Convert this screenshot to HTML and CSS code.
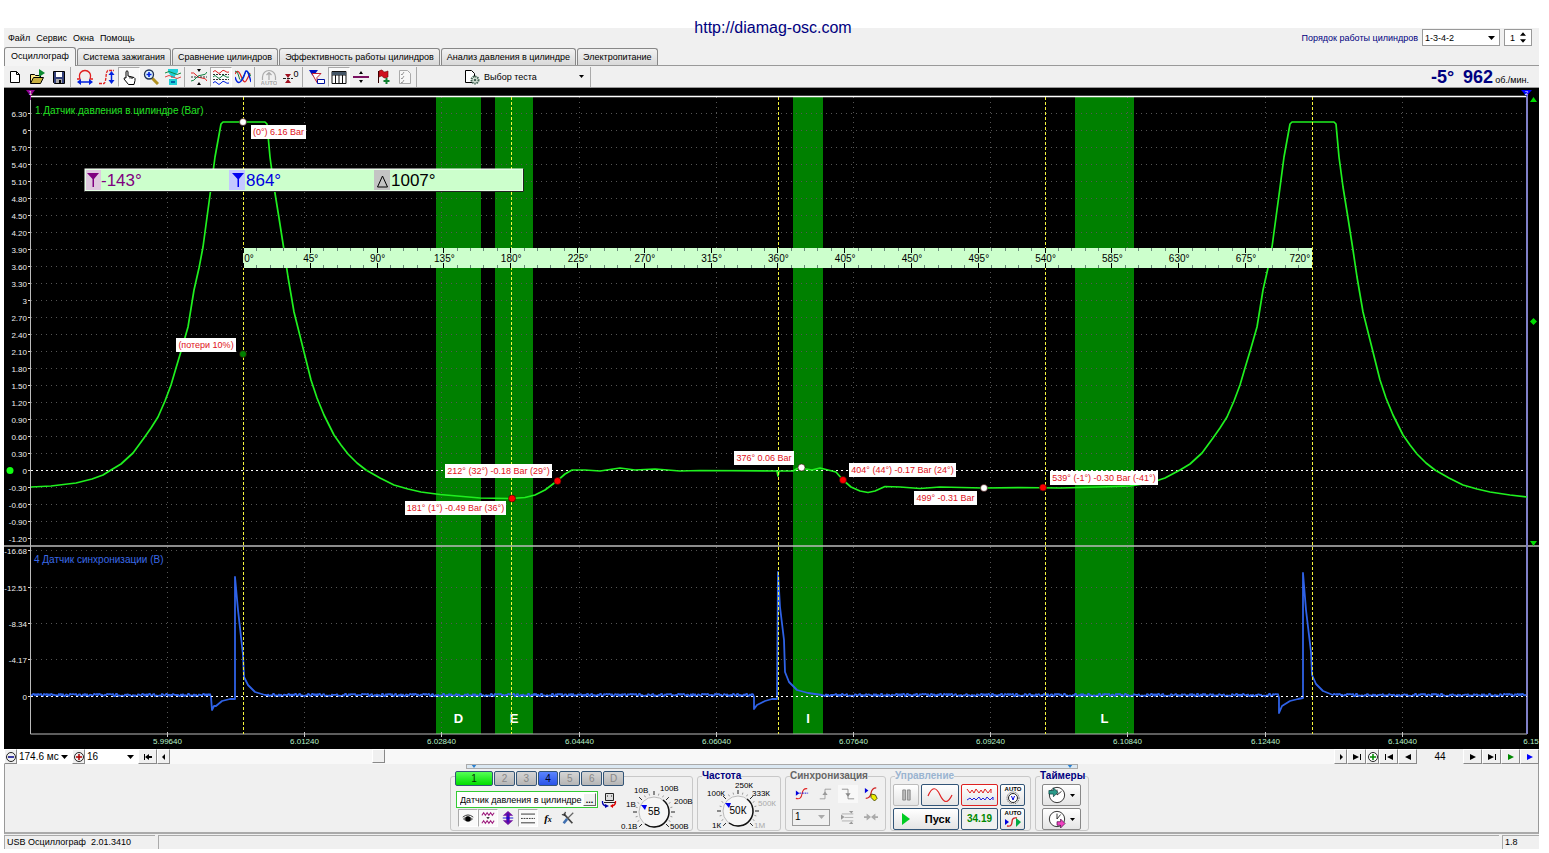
FILE: index.html
```html
<!DOCTYPE html>
<html lang="ru">
<head>
<meta charset="utf-8">
<title>USB Осциллограф</title>
<link rel="stylesheet" href="styles.css">
</head>
<body>
<a class="site-link" href="http://diamag-osc.com">http://diamag-osc.com</a>
<div class="app">
  <header class="top">
    <nav class="menu">
      <button>Файл</button><button>Сервис</button><button>Окна</button><button>Помощь</button>
    </nav>
    <div class="order">
      <label for="order">Порядок работы цилиндров</label>
      <span class="pick boxed order-pick"><select id="order"><option>1-3-4-2</option></select><svg class="caret" viewBox="0 0 7 4"><path d="M0 0h7L3.500 4z"/></svg></span>
      <span class="spin"><input id="cyl" aria-label="Цилиндр" value="1"><svg viewBox="0 0 7 12"><path d="M0 4h7L3.500 0zM0 8h7L3.500 12z"/></svg></span>
    </div>
  </header>
  <nav class="tabs">
    <button class="tab active">Осциллограф</button>
    <button class="tab">Система зажигания</button>
    <button class="tab">Сравнение цилиндров</button>
    <button class="tab">Эффективность работы цилиндров</button>
    <button class="tab">Анализ давления в цилиндре</button>
    <button class="tab">Электропитание</button>
  </nav>
  <div class="toolbar">
    <button class="tool" aria-label="Новый"><svg viewBox="0 0 16 16"><path d="M3.500 2.500h6l3 3v8h-9zM9.500 2.500v3h3" fill="#fff" stroke="#000"/></svg></button>
    <button class="tool" aria-label="Открыть"><svg viewBox="0 0 16 16"><path d="M1.500 14V5.500h4l1 1h5V9" fill="#ffe98a" stroke="#000"/><path d="M1.500 14.500l3-6h10l-3 6z" fill="#c8b040" stroke="#000"/><path d="M10 0l6 4-6 4z" fill="#0a8a30"/></svg></button>
    <button class="tool" aria-label="Сохранить"><svg viewBox="0 0 16 16"><path d="M2.500 2.500h11v12h-10l-1-1z" fill="#33407a" stroke="#000"/><path d="M5 3h6v5H5z" fill="#fff"/><path d="M5 10h6v4H5z" fill="#aaa"/><path d="M8 11h2v3H8z" fill="#000"/></svg></button>
    <i class="sep"></i>
    <button class="tool" aria-label="Период"><svg viewBox="0 0 16 16" fill="none"><path d="M0 10h3C1 4 5 1.500 8 1.500S15 4 13 10h3" stroke="#e02020" stroke-width="1.300"/><path d="M2 13h12" stroke="#0020e0" stroke-width="1.500"/><path d="M0 13l4-3v6zM16 13l-4-3v6z" fill="#0020e0"/></svg></button>
    <button class="tool" aria-label="Амплитуда"><svg viewBox="0 0 16 16" fill="none"><path d="M0 14.500h5C8 12 6 3 9 1.500h6" stroke="#e02020" stroke-width="1.300" stroke-dasharray="3 1"/><path d="M12.500 4v8" stroke="#0020e0" stroke-width="1.500"/><path d="M12.500 2l3 4h-6zM12.500 15l3-4h-6z" fill="#0020e0"/></svg></button>
    <button class="tool on" aria-label="Рука"><svg viewBox="0 0 16 16"><path d="M5 9V2.500Q6 1 7 2.500V7l6 1.500q1.500.5 1 3l-1 4H7.500L3 10q0-2 2-1M9 7.500v2M11 8v2" fill="#fff" stroke="#000"/></svg></button>
    <button class="tool" aria-label="Масштаб"><svg viewBox="0 0 16 16" fill="none"><path d="M9 9l6 6" stroke="#b09020" stroke-width="3"/><circle cx="6" cy="5.500" r="4.500" fill="#d8efff" stroke="#203050" stroke-width="1.300"/><path d="M3.500 5.500h5M6 3v5" stroke="#0020e0" stroke-width="1.600"/></svg></button>
    <button class="tool" aria-label="Обзор"><svg viewBox="0 0 16 16" fill="none"><path d="M3 0h10v3l-3 4v2H6V7L3 3zM4 10h8v6H4z" fill="#20d0d8"/><path d="M0 4q4-3 8 0t8 0" stroke="#178a40"/><path d="M0 8q4-3 8 0t8 0" stroke="#e04040"/><path d="M6 12h4v2H6z" fill="#06a"/></svg></button>
    <i class="sep"></i>
    <button class="tool" aria-label="Центр"><svg viewBox="0 0 16 16" fill="none"><path d="M6 0h4L8 3zM6 16h4l-2-3z" fill="#000"/><path d="M0 4q3-1 5 2t6 3 5 3" stroke="#e02020"/><path d="M0 12q3 0 5-3t6-3 5-3" stroke="#108040"/><path d="M0 8h16" stroke="#333" stroke-dasharray="2 1"/></svg></button>
    <button class="tool on" aria-label="Раздельно"><svg viewBox="0 0 16 16" fill="none"><path d="M0 3q2-3 4 0t4 0 4-1 4 1" stroke="#e02020"/><path d="M0 8q2-3 4 0t4 0 4-1 4 1" stroke="#108040"/><path d="M0 14q2-3 4 0t4 0 4-1 4 1" stroke="#0020e0"/><path d="M0 5.500h16M0 10.500h16" stroke="#333" stroke-dasharray="2 1"/></svg></button>
    <button class="tool" aria-label="Вместе"><svg viewBox="0 0 16 16" fill="none"><path d="M0 5q3-6 6 2t5 5 4-8" stroke="#e02020" stroke-width="1.200"/><path d="M0 2q3 0 4 6t4 0 4-6 4 5" stroke="#108040"/><path d="M0 8q2 7 5 5t5-9 6 9" stroke="#0020e0" stroke-width="1.400"/></svg></button>
    <i class="sep"></i>
    <button class="tool" aria-label="Авто"><svg viewBox="0 0 16 16" fill="none"><path d="M1.500 11V8a6.500 6.500 0 0113 0v3M8 11V4M5.500 6L8 3.500 10.500 6" stroke="#aaa" stroke-width="1.200"/><text x="8" y="16" class="tiny grey">AUTO</text></svg></button>
    <button class="tool" aria-label="Ноль"><svg viewBox="0 0 16 16" fill="none"><path d="M0 9.500h10" stroke="#222" stroke-dasharray="3 1"/><path d="M2 5h6L5 9zM2 14h6l-3-4z" fill="#a01020"/><text x="13" y="8" class="zero">0</text></svg></button>
    <i class="sep"></i>
    <button class="tool" aria-label="Фильтр"><svg viewBox="0 0 16 16" fill="none"><path d="M0 1h9L6 5v3L3 6z" fill="#0010c0"/><path d="M3 4.500h9l-4 4v5L6 10z" fill="#fff" stroke="#c02030"/><path d="M8.500 10.500h7v4h-7z" fill="#fff" stroke="#0010a0"/></svg></button>
    <button class="tool on" aria-label="Таблица"><svg viewBox="0 0 16 16"><path d="M1 2.500h14v12H1zM1 6h14M4.500 6v8M8 6v8M11.500 6v8" fill="#fff" stroke="#111"/><path d="M1 3h14v3H1z" fill="#456"/></svg></button>
    <button class="tool" aria-label="Разделить"><svg viewBox="0 0 16 16"><path d="M0 7h16v2H0z" fill="#7a1060"/><path d="M6 5h4L8 2zM6 11h4l-2 3z"/></svg></button>
    <button class="tool" aria-label="Флаг"><svg viewBox="0 0 16 16"><path d="M3.500 2v12" stroke="#300"/><path d="M4 2q3-2 4 0t5 0v6q-4 2-5 0T4 8z" fill="#d01020" stroke="#600" stroke-width=".6"/><path d="M11.500 9v6M8.500 12h6" stroke="#108030" stroke-width="2"/></svg></button>
    <button class="tool" aria-label="Отчёт"><svg viewBox="0 0 16 16"><path d="M2.500 1.500h8l3 3v10h-11z" fill="#f8f8f8" stroke="#aaa"/><path d="M4 5l1 1 2-3M4 9l1 1 2-3M4 13l1 1 2-3" fill="none" stroke="#999"/></svg></button>
    <i class="sep"></i>
    <button class="test"><svg class="ico" viewBox="0 0 16 16"><path d="M1.500 1.500h6l3 3v9h-9z" fill="#fff" stroke="#000"/><circle cx="11" cy="11" r="3.500" fill="#dfe8df" stroke="#465" stroke-width="2" stroke-dasharray="1.500 .8"/><circle cx="11" cy="11" r="1.300" fill="#465"/></svg><span>Выбор теста</span><svg class="caret small" viewBox="0 0 7 4"><path d="M0 0h7L3.500 4z"/></svg></button>
    <i class="sep"></i>
    <output class="rpm"><b>-5°</b><b>962</b><span>об./мин.</span></output>
  </div>

  <svg class="scope" viewBox="4 88 1535 661" role="img" aria-label="Осциллограмма">
    <rect x="4" y="88" width="1535" height="661"/>
    <g id="bands"></g>
    <g id="grid"></g>
    <g id="axes"></g>
    <path id="pressure" class="pressure"/>
    <path id="sync" class="sync"/>
    <g id="zeros"></g>
    <g id="cursors"></g>
    <g id="ruler"></g>
    <g id="notes"></g>
    <text x="35" y="114" class="title green">1 Датчик давления в цилиндре (Bar)</text>
    <text x="34" y="563" class="title blue">4 Датчик синхронизации (В)</text>
    <g class="readout">
      <rect x="85" y="169" width="438" height="22" fill="#cfc" stroke="#fff"/>
      <path d="M85 191.500h438.500v-23" fill="none" stroke="#222"/>
      <path d="M86 170h15v20H86z" fill="#dfc8df"/><path d="M229 170h16v20h-16z" fill="#c4c8ff"/><path d="M374 170h16v20h-16z" fill="#c4c4c4"/>
      <path d="M87 173h12l-5 6v8h-1.500v-8z" fill="#800080"/><path d="M232 173h12l-5 6v8h-1.500v-8z" fill="#0000f0"/>
      <path d="M377.500 187h10l-5-11z" fill="none" stroke="#000"/>
      <text x="101" y="186" fill="#800080">-143°</text><text x="246" y="186" fill="#0000e0">864°</text><text x="391" y="186">1007°</text>
    </g>
  </svg>

  <div class="scroller">
    <button class="nav n13" aria-label="Уменьшить"><svg viewBox="0 0 12 12" fill="none"><circle cx="6" cy="6" r="4.500" stroke="#222"/><path d="M3 6h6" stroke="#008" stroke-width="1.500"/></svg></button>
    <span class="pick span"><select aria-label="Развёртка"><option>174.6 мс</option></select><svg class="caret" viewBox="0 0 7 4"><path d="M0 0h7L3.500 4z"/></svg></span>
    <button class="nav n13" aria-label="Увеличить"><svg viewBox="0 0 12 12" fill="none"><circle cx="6" cy="6" r="4.500" stroke="#222"/><path d="M3 6h6M6 3v6" stroke="#a00" stroke-width="1.500"/></svg></button>
    <span class="pick zoom"><select aria-label="Масштаб"><option>16</option></select><svg class="caret" viewBox="0 0 7 4"><path d="M0 0h7L3.500 4z"/></svg></span>
    <button class="nav" aria-label="В начало"><svg viewBox="0 0 12 12"><path d="M2 3h1v6H2zM7 3v6L3 6zM7 5h3v2H7z"/></svg></button>
    <button class="nav n13" aria-label="Назад"><svg viewBox="0 0 12 12"><path d="M7 3v6L4 6z"/></svg></button>
    <div class="track"><i class="thumb"></i></div>
    <button class="nav n13" aria-label="Вперёд"><svg viewBox="0 0 12 12"><path d="M5 3v6l3-3z"/></svg></button>
    <button class="nav" aria-label="В конец"><svg viewBox="0 0 12 12"><path d="M9 3h1v6H9zM2 3v6l6-3z"/></svg></button>
    <button class="nav n13" aria-label="Добавить кадр"><svg viewBox="0 0 12 12" fill="none"><circle cx="6" cy="6" r="4.500" stroke="#222" fill="#fff"/><path d="M3 6h6M6 3v6" stroke="#080" stroke-width="1.500"/></svg></button>
    <button class="nav" aria-label="Первый кадр"><svg viewBox="0 0 12 12"><path d="M2 3h1v6H2zM10 3v6L4 6z"/></svg></button>
    <button class="nav" aria-label="Пред. кадр"><svg viewBox="0 0 12 12"><path d="M9 3v6L3 6z"/></svg></button>
    <span class="frame">44</span>
    <button class="nav" aria-label="След. кадр"><svg viewBox="0 0 12 12"><path d="M3 3v6l6-3z"/></svg></button>
    <button class="nav" aria-label="Последний кадр"><svg viewBox="0 0 12 12"><path d="M9 3h1v6H9zM2 3v6l6-3z"/></svg></button>
    <button class="nav" aria-label="Проиграть"><svg viewBox="0 0 12 12"><path d="M3 3v6l6-3z" fill="#080"/></svg></button>
    <button class="nav" aria-label="Проиграть всё"><svg viewBox="0 0 12 12"><path d="M3 3v6l6-3z" fill="#00f"/></svg></button>
  </div>

  <div class="dock">
    <div class="grip"><svg viewBox="0 0 6 4"><path d="M0 0h6L3 4z"/></svg><svg viewBox="0 0 6 4"><path d="M0 0h6L3 4z"/></svg></div>
    <div class="groups">
      <section class="group channels">
        <div class="chan-row">
          <button class="ch one">1</button><button class="ch">2</button><button class="ch">3</button><button class="ch four">4</button><button class="ch">5</button><button class="ch">6</button><button class="ch">D</button>
        </div>
        <div class="chan-body">
          <div class="chan-left">
            <div class="sensor-row">
              <span class="sensor"><input aria-label="Датчик" value="Датчик давления в цилиндре"><button>...</button></span>
              <svg class="ico" viewBox="0 0 16 16" fill="none"><path d="M4.500 1.500h8v7h-8z" fill="#ddd" stroke="#222"/><path d="M6 4h1m3 0h1M3 10.500h11" stroke="#222"/><path d="M5 14Q1 13 1.500 9" stroke="#00a" stroke-width="1.300"/><path d="M4 12l4 2-4 2z" fill="#00a"/><path d="M11 14q4-1 3.500-5" stroke="#d00" stroke-width="1.300"/><path d="M12 12l-3 2 3 2z" fill="#d00"/></svg>
            </div>
            <div class="view-row">
              <button class="mini on" aria-label="Показать"><svg viewBox="0 0 16 16"><path d="M2 9q5-6 12 0-6 6-12 0z" fill="#777"/><circle cx="8" cy="9" r="3"/><path d="M2 7q6-5 12 0" fill="none" stroke="#222"/></svg></button>
              <button class="mini on" aria-label="Сигнал"><svg viewBox="0 0 16 16" fill="none"><path d="M1 5l2-3 2 3 2-3 2 3 2-3 2 3 2-3M1 14l2-3 2 3 2-3 2 3 2-3 2 3 2-3" stroke="#a02080" stroke-width="1.200"/><path d="M6 7h4L8 9z" fill="#000"/></svg></button>
              <button class="mini" aria-label="Сдвиг"><svg viewBox="0 0 16 16"><path d="M8 0l6 5.500h-4v5h4L8 16l-6-5.500h4v-5H2z" fill="#7010a0"/><path d="M8 3v10M2 8h12" stroke="#00d"/></svg></button>
              <button class="mini on" aria-label="Линии"><svg viewBox="0 0 16 16"><path d="M0 3.500h16M0 13.500h16" stroke="#222"/><path d="M0 8.500h16" stroke="#222" stroke-dasharray="2 1"/></svg></button>
              <button class="mini fx">f<sub>x</sub></button>
              <button class="mini" aria-label="Настройка"><svg viewBox="0 0 16 16" fill="none"><path d="M3 3l10 11" stroke="#444" stroke-width="2"/><path d="M14 2L7 9" stroke="#666" stroke-width="1.500"/><path d="M7 9l-4 5" stroke="#4070b0" stroke-width="3"/><path d="M1 4l3 1 1-4" stroke="#333" stroke-width="1.300"/></svg></button>
            </div>
          </div>
          <svg class="dial volt" viewBox="0 0 70 50"><g class="ticks"></g><text x="35" y="29" class="val">5В</text><path d="M22 19h6l-2 5z" fill="#00e"/>
            <text x="2" y="43">0.1В</text><text x="7" y="21">1В</text><text x="15" y="7">10В</text><text x="41" y="5">100В</text><text x="55" y="18">200В</text><text x="51" y="43">500В</text></svg>
        </div>
      </section>
      <fieldset class="group freq"><legend>Частота</legend>
        <svg class="dial" viewBox="0 0 80 50"><g class="ticks"></g><text x="40" y="29" class="val">50К</text><path d="M27 18h6l-2 5z" fill="#00e"/>
          <text x="14" y="43">1К</text><text x="9" y="11">100К</text><text x="37" y="3">250К</text><text x="54" y="11">333К</text><text x="60" y="21" class="off">500К</text><text x="56" y="43" class="off">1М</text></svg>
      </fieldset>
      <fieldset class="group syncbox"><legend>Синхронизация</legend>
        <div class="sync-grid">
          <button class="mini" aria-label="Уровень"><svg viewBox="0 0 16 16" fill="none"><path d="M1 13q6 2 7-5t6-6" stroke="#e02020" stroke-width="1.300"/><path d="M1 4l4 3-4 3z" fill="#00d"/><path d="M5 7h10" stroke="#00d" stroke-dasharray="2 1"/></svg></button>
          <button class="mini" aria-label="Фронт"><svg viewBox="0 0 16 16" fill="none"><path d="M2 13.500h6v-11h7" stroke="#999"/><path d="M8 5l-3 4h6z" fill="#999"/></svg></button>
          <button class="mini lit" aria-label="Спад"><svg viewBox="0 0 16 16" fill="none"><path d="M1 2.500h7v11h7" stroke="#888"/><path d="M8 11L5 7h6z" fill="#888"/></svg></button>
          <button class="mini" aria-label="Авто уровень"><svg viewBox="0 0 16 16" fill="none"><path d="M1 1l4 3-4 3z" fill="#00d"/><path d="M2 13q5 0 6-6t6-6" stroke="#d02020" stroke-width="1.300"/><path d="M8 8l5 1 2 4-3 3-4-4z" fill="#ee0" stroke="#440"/></svg></button>
          <span class="pick boxed sync-pick"><select aria-label="Канал синхронизации"><option>1</option></select><svg class="caret dim" viewBox="0 0 7 4"><path d="M0 0h7L3.500 4z"/></svg></span>
          <button class="mini" aria-label="Окно"><svg viewBox="0 0 16 16" fill="none"><path d="M1 4.500h13M4 8.500h10M1 12.500h13" stroke="#aaa"/><path d="M0 5l4 3-4 3zM9 1h5l-2 3zM9 16h5l-2-3z" fill="#999"/></svg></button>
          <button class="mini" aria-label="Сжать"><svg viewBox="0 0 16 16"><path d="M0 7h3V4l5 4-5 4V9H0zM16 7h-3V4L8 8l5 4V9h3z" fill="#aaa"/></svg></button>
        </div>
      </fieldset>
      <fieldset class="group control"><legend>Управление</legend>
        <div class="ctl-grid">
          <button class="big flat" aria-label="Пауза"><svg viewBox="0 0 26 18"><path d="M9.500 3.500h3v11h-3zM14.500 3.500h3v11h-3z" fill="#bbb" stroke="#888"/></svg></button>
          <button class="big wave" aria-label="Сигнал"><svg viewBox="0 0 32 18" fill="none"><path d="M4 10Q10-4 16 9t12 0" stroke="#e02020" stroke-width="1.200"/></svg></button>
          <button class="big red" aria-label="Запись"><svg viewBox="0 0 32 18" fill="none"><path d="M3 3l3 4 2-3 2 3 2-4 3 4 2-3 2 3 2-4 3 4 3-4v4" stroke="#e02020"/><path d="M3 14l3-2 2 2 2-2 2 2 3-3 2 3 2-2 2 2 2-3 3 3 3-3v3" stroke="#2020e0"/></svg></button>
          <button class="big" aria-label="Авто диапазон"><svg viewBox="0 0 20 18" fill="none"><text x="10" y="5" class="tiny">AUTO</text><circle cx="10" cy="12" r="4.500" stroke="#222" fill="#fff"/><circle cx="10" cy="12" r="6" stroke="#555" stroke-dasharray="1 1"/><path d="M8.500 10l1.500 4 1.500-4" stroke="#00d"/></svg></button>
          <button class="big start"><svg viewBox="0 0 9 12"><path d="M0 0l8 6-8 6z" fill="#0c2"/></svg>Пуск</button>
          <button class="big time">34.19</button>
          <button class="big" aria-label="Авто синхронизация"><svg viewBox="0 0 20 18" fill="none"><text x="10" y="5" class="tiny">AUTO</text><path d="M4 16q5 1 5-4t5-4" stroke="#d02020" stroke-width="1.300"/><path d="M2 9l4 3-4 3z" fill="#00d"/><path d="M13 8l5 4-5 5z" fill="#0a4"/></svg></button>
        </div>
      </fieldset>
      <fieldset class="group timers"><legend>Таймеры</legend>
        <div class="timer-list">
          <button class="big" aria-label="Таймер пуска"><svg viewBox="0 0 20 20" fill="none"><circle cx="10" cy="10" r="8.500" stroke="#222" fill="#fff"/><path d="M10 10V4M10 10l5-4" stroke="#222"/><path d="M1 5h5V2l5 5-5 5V9H1z" fill="#2a9a8a" stroke="#033" stroke-width=".7"/></svg><svg class="caret small" viewBox="0 0 7 4"><path d="M0 0h7L3.500 4z"/></svg></button>
          <button class="big" aria-label="Таймер остановки"><svg viewBox="0 0 20 20" fill="none"><circle cx="10" cy="10" r="8.500" stroke="#222" fill="#fff"/><path d="M10 10V4M10 10l4-5" stroke="#222"/><path d="M10 13h4v-3l5 5-5 5v-3h-4z" fill="#f040c0" stroke="#303" stroke-width=".7"/></svg><svg class="caret small" viewBox="0 0 7 4"><path d="M0 0h7L3.500 4z"/></svg></button>
        </div>
      </fieldset>
    </div>
  </div>
  <footer class="status"><span class="ver">USB Осциллограф&nbsp; 2.01.3410</span><span class="fill"></span><span class="build">1.8</span></footer>
</div>
<script src="scope.js"></script>
</body>
</html>
```
FILE: styles.css
```css
* { box-sizing: border-box; }
body { margin: 0; background: #fff; color: #000; font: 9px/12px "Liberation Sans", Arial, sans-serif; position: relative; }
button, input, select { font: inherit; color: inherit; margin: 0; padding: 0; border: 0; background: none; border-radius: 0; }
select { appearance: none; width: 100%; }
input { min-width: 0; }
svg { display: block; }
.site-link { position: absolute; top: 19px; left: 0; right: 3px; margin: auto; width: fit-content; font-size: 16px; line-height: 18px; color: #000080; text-decoration: none; }
.app { margin: 28px 10px 4px 4px; background: #f0f0f0; }
.top { display: flex; justify-content: space-between; height: 19px; }
.menu { display: flex; align-items: flex-start; gap: 6px; padding: 4px 4px 0; }
.order { display: flex; gap: 4px; align-items: center; padding-right: 7px; color: #000080; }
.pick { display: grid; align-items: center; background: #fff; color: #000; }
.pick > * { grid-area: 1 / 1; }
.caret { width: 7px; height: 4px; justify-self: end; margin-right: 4px; pointer-events: none; }
.caret.small { width: 5px; height: 3px; margin: 0; }
.caret.dim { fill: #aaa; }
.boxed { border: 1px solid #999; padding-left: 2px; }
.order-pick { width: 78px; height: 17px; }
.spin { display: flex; align-items: center; justify-content: space-between; width: 28px; height: 17px; border: 1px solid #999; background: #fff; color: #000; padding: 0 5px; }
.spin input { width: 8px; }
.spin svg { width: 6px; height: 11px; }
.tabs { display: flex; align-items: flex-end; gap: 1px; height: 19px; border-bottom: 1px solid #999; }
.tab { height: 17px; padding: 0 5px; border: 1px solid #888; border-bottom: 0; border-radius: 3px 3px 0 0; background: linear-gradient(#f2f2f2, #d9d9d9); white-space: nowrap; }
.tab.active { height: 19px; margin-bottom: -1px; padding: 0 6px 3px; background: #f4f4f4; }
.toolbar { display: flex; align-items: center; height: 22px; border-bottom: 1px solid #999; }
.tool { width: 22px; height: 20px; display: grid; place-items: center; flex: none; }
.tool svg, .ico { width: 16px; height: 16px; flex: none; }
.on { background: #fafafa; border: 1px solid #aaa; border-right-color: #fff; border-bottom-color: #fff; }
.sep { width: 4px; height: 20px; border-left: 1px solid #aaa; flex: none; }
.test { display: flex; align-items: center; gap: 4px; width: 170px; padding: 0 6px 0 44px; white-space: nowrap; }
.test .caret { margin-left: auto; }
.rpm { display: flex; align-items: baseline; gap: 2px; margin-left: auto; padding-right: 10px; }
.rpm b { font-size: 18px; line-height: 20px; color: #000080; }
.rpm b:first-child { margin-right: 7px; }
.tiny { font: bold 6px "Liberation Sans", sans-serif; text-anchor: middle; fill: #000; }
.grey { fill: #aaa; }
.zero { font: 9px "Liberation Sans", sans-serif; text-anchor: middle; fill: #000; }

.scope { width: 100%; height: auto; font-family: "Liberation Sans", Arial, sans-serif; }
.title { font-size: 10px; }
.green { fill: #22e022; }
.blue { fill: #3a6ae8; }
.pressure { fill: none; stroke: #1ff01f; stroke-width: 1.7; stroke-linejoin: round; }
.sync { fill: none; stroke: #2f62e6; stroke-width: 1.8; stroke-linejoin: round; }
.dots { stroke: #555; stroke-dasharray: 1 4; fill: none; }
.zero-line { stroke: #fff; stroke-dasharray: 2 3; fill: none; }
.cursor { stroke: #f4f43c; stroke-dasharray: 3 2; fill: none; }
.y-label { font-size: 8px; fill: #eee; text-anchor: end; }
.x-label { font-size: 8px; fill: #b8f0c8; text-anchor: middle; }
.band-label { font-size: 13px; font-weight: bold; fill: #fff; text-anchor: middle; }
.mark { font-size: 10px; text-anchor: middle; }
.note { font-size: 9px; fill: #e01020; text-anchor: middle; }
.readout { font-size: 17px; }

.scroller { display: flex; height: 15px; font-size: 10px; }
.nav { width: 19px; display: grid; place-items: center; border: 1px solid #fff; border-right-color: #888; border-bottom-color: #888; flex: none; }
.nav svg { width: 12px; height: 12px; }
.n13 { width: 13px; }
.span { width: 55px; padding-left: 2px; }
.zoom { width: 53px; padding-left: 2px; }
.track { flex: 1; background: #f8f8f8; padding-left: 202px; }
.thumb { display: block; width: 13px; height: 14px; background: #f0f0f0; border: 1px solid #fff; border-right-color: #888; border-bottom-color: #888; }
.frame { width: 46px; text-align: center; line-height: 15px; }

.dock { border-bottom: 2px solid #aaa; border-left: 1px solid #999; border-right: 1px solid #999; }
.grip { display: flex; justify-content: space-between; width: 612px; height: 5px; margin: 0 auto; padding: 0 4px; border: 1px solid #aaa; background: #dbe8f2; }
.grip svg { width: 6px; height: 3px; fill: #2a80d0; }
.groups { display: flex; justify-content: center; gap: 4px; padding: 2px 4px 0 0; height: 63px; }
.group { margin: 0 0 1px; padding: 0; border: 1px solid #c8c8c8; border-radius: 3px; min-width: 0; }
.group legend { font-size: 10px; font-weight: bold; line-height: 10px; padding: 0; margin-left: 4px; color: #000080; }
.group.channels { width: 243px; margin-top: 5px; }
.chan-row { display: flex; gap: 1px; margin: -6px 0 0 4px; width: 169px; background: #f0f0f0; }
.ch { flex: 1; height: 15px; border: 1px solid #357; border-radius: 2px; background: linear-gradient(#d5d5d5, #b5b5b5); color: #888; font-size: 10px; }
.ch.one { flex: none; width: 38px; background: linear-gradient(#5f5, #0d0); color: #030; }
.ch.four { background: linear-gradient(#5a84ff, #2a54e8); color: #002; }
.chan-body { display: flex; }
.chan-left { padding: 5px 0 0 5px; width: 168px; }
.sensor-row { display: flex; gap: 3px; align-items: center; }
.sensor { display: flex; width: 142px; height: 17px; border: 1px solid #3c3; background: #fff; padding: 1px; }
.sensor input { flex: 1; padding-left: 2px; }
.sensor button { width: 13px; background: #f0f0f0; border: 1px solid #fff; border-right-color: #666; border-bottom-color: #666; line-height: 6px; font-weight: bold; }
.view-row { display: flex; padding: 1px 0 0 2px; }
.mini { width: 20px; height: 18px; display: grid; place-items: center; }
.mini svg { width: 14px; height: 14px; }
.mini.fx { font: italic bold 11px "Liberation Serif", serif; display: block; }
.fx sub { font-size: 8px; vertical-align: baseline; }
.lit { background: #f8f8f8; }
.dial { overflow: visible; font-size: 8px; flex: none; }
.dial.volt { width: 70px; height: 50px; }
.dial .val { font-size: 10px; text-anchor: middle; }
.off { fill: #aaa; }
.freq { width: 84px; }
.freq .dial { width: 80px; height: 50px; margin-top: 4px; }
.syncbox { width: 101px; }
.group.syncbox legend { color: #666; }
.sync-grid { display: grid; grid-template-columns: repeat(4, 23px); align-items: center; padding: 4px 0 0 6px; row-gap: 5px; }
.sync-pick { grid-column: span 2; width: 38px; height: 17px; background: #f0f0f0; font-size: 10px; }
.control { width: 141px; }
.group.control legend { color: #9ab4d0; }
.ctl-grid { display: grid; grid-template-columns: 26px 9px 27px 37px 25px; gap: 2px; padding: 3px 2px 0; }
.big { height: 22px; border: 1px solid #357; border-radius: 2px; background: linear-gradient(#fff, #e4e4e4); display: flex; align-items: center; justify-content: center; gap: 4px; }
.big > svg:not(.caret) { height: 18px; }
.flat { border-color: #bbb; }
.wave { grid-column: span 2; }
.red { border-color: #d22; }
.big.start { grid-column: span 3; font-size: 11px; font-weight: bold; gap: 14px; }
.big.start svg { width: 9px; height: 12px; }
.big.time { font-size: 10px; font-weight: bold; color: #080; background: #f0f0f0; }
.timers { width: 54px; }
.timer-list { display: grid; gap: 2px; padding: 3px 0 0 6px; }
.timers .big { width: 39px; border-color: #888; }
.status { display: flex; gap: 3px; height: 15px; padding-top: 1px; line-height: 13px; }
.status span { border: 1px solid #aaa; border-right: 0; border-bottom: 0; padding-left: 2px; }
.ver { width: 151px; }
.fill { flex: 1; }
.build { width: 37px; }
```
FILE: scope.js
```js
const NS = 'http://www.w3.org/2000/svg';
const byId = id => document.getElementById(id);

function add(parent, name, attrs, text) {
  const el = document.createElementNS(NS, name);
  for (const key in attrs) el.setAttribute(key, attrs[key]);
  if (text !== undefined) el.textContent = text;
  parent.appendChild(el);
  return el;
}

// Valve phase bands
const bands = byId('bands');
[[436, 45, 'D'], [495, 38, 'E'], [793, 30, 'I'], [1075, 59, 'L']].forEach(([x, w, name]) => {
  add(bands, 'rect', { x, y: 97, width: w, height: 637, fill: '#008000' });
  add(bands, 'text', { x: x + w / 2, y: 723, class: 'band-label' }, name);
});

// Grid and scales
const grid = byId('grid');
const axes = byId('axes');
const zeros = byId('zeros');
function level(y, label) {
  const zero = label === '0';
  add(zero && y > 600 ? zeros : grid, 'path', { d: `M31 ${y}H1527`, class: zero ? 'zero-line' : 'dots' });
  add(axes, 'path', { d: `M28 ${y}h3`, stroke: '#ddd' });
  add(axes, 'text', { x: 27, y: y + 3, class: 'y-label' }, label);
}
for (let i = 0; i <= 25; i++) {
  const v = 6.3 - i * 0.3;
  level(113.5 + i * 17, i % 10 === 1 ? String(Math.abs(Math.round(v))) : v.toFixed(2));
}
level(550.5, '-16.68');
level(587.5, '-12.51');
level(623.5, '-8.34');
level(659.5, '-4.17');
level(696.5, '0');
for (let i = 0; i <= 9; i++) {
  const x = Math.round(167 + i * 137.2) + 0.5;
  add(grid, 'path', { d: `M${x} 97V734`, class: 'dots' });
  add(axes, 'path', { d: `M${x} 732v5`, stroke: '#ccc' });
  add(axes, 'text', { x, y: 744, class: 'x-label' }, (5.9964 + i * 0.016).toFixed(5));
}
add(axes, 'text', { x: 1531, y: 744, class: 'x-label' }, '6.15');
add(axes, 'path', { d: 'M31 96.5H1527', stroke: '#fff', 'stroke-width': 1.5 });
add(axes, 'path', { d: 'M4 546H1539', stroke: '#bbb', 'stroke-width': 1.5 });
add(axes, 'path', { d: 'M30.5 97V734H1527', stroke: '#bbb', fill: 'none' });
add(axes, 'path', { d: 'M1527 94V734', stroke: '#8080c8', 'stroke-width': 2 });
add(axes, 'path', { d: 'M26 90h9l-4.500 6zM30 94h1v6h-1z', fill: '#900090' });
add(axes, 'path', { d: 'M1521 90h11l-5.500 6z', fill: '#00f' });
add(axes, 'path', { d: 'M1530 102h7l-3.500-5zM1530 541h7l-3.500 5zM1530 321.500l3.500-3.500 3.500 3.500-3.500 3.500z', fill: '#0d0' });
add(axes, 'circle', { cx: 10, cy: 470.5, r: 3.5, fill: '#1f1' });
add(axes, 'text', { x: 30.5, y: 95, 'font-size': 6, fill: '#fff', 'text-anchor': 'middle' }, '1');
add(axes, 'text', { x: 1526.5, y: 95, 'font-size': 6, fill: '#fff', 'text-anchor': 'middle' }, '2');

// Cylinder pressure trace: the compression stroke repeats once per cycle
const CYCLE = 1069;
const rise = [
  [133, 453], [144, 438], [151, 428], [158, 417], [165, 401], [171, 385], [176, 368], [182, 348], [188, 327], [194, 290],
  [199, 268], [203, 247], [210, 195], [215, 157], [221, 124], [223, 122]
];
const fall = [
  [265, 122], [267, 124], [270, 157], [274, 187], [279, 218], [284, 250], [288, 277], [294, 312], [303, 348], [311, 380],
  [317, 398], [324, 415], [334, 435], [341, 445], [348, 454], [357, 463], [366, 470], [380, 478], [394, 485]
];
const shift = points => points.map(([px, py]) => [px + CYCLE, py]);
const pressure = [
  [31, 487], [51, 486], [76, 483], [92, 479], [103, 475], [111, 470], [121, 464], ...rise, ...fall,
  [408, 489], [421, 492], [440, 494.5], [480, 498], [511, 498.5], [525, 497.5],
  [535, 495], [545, 490], [557, 481], [565, 474], [572, 470], [585, 470], [600, 471], [620, 468], [635, 470], [655, 469],
  [680, 471], [700, 470.5], [777, 471], [778, 476], [779, 471], [793, 471], [799, 467.5], [806, 469], [812, 470], [820, 468],
  [830, 470.5], [836, 472], [843, 480], [851, 487], [860, 491], [868, 492.5], [875, 491], [885, 486.5], [900, 487],
  [920, 488.5], [940, 487], [983, 488], [1020, 487.5], [1060, 488], [1100, 487], [1130, 486], [1150, 483], [1165, 478],
  [1180, 470], [1190, 464], ...shift(rise), ...shift(fall), [1477, 489], [1490, 492], [1510, 495], [1527, 497]
];
byId('pressure').setAttribute('d', 'M' + pressure.join('L'));

// Sync sensor trace with low-level noise
const pulses = [
  [[211, 697], [212, 710], [214, 706], [216, 706], [222, 701], [230, 699], [235, 699], [235, 577], [238, 610], [243, 655], [244, 677], [248, 685], [255, 692], [265, 695]],
  [[754, 697], [754, 709], [757, 705], [765, 701], [772, 699], [777, 699], [778, 572], [780, 607], [784, 640], [785, 672], [789, 682], [797, 690], [808, 693], [822, 695]],
  [[1279, 698], [1279, 713], [1282, 706], [1290, 701], [1298, 699], [1303, 698], [1303, 573], [1306, 610], [1311, 652], [1312, 675], [1316, 684], [1323, 691], [1333, 695]]
];
const sync = [];
let x = 31;
function noiseUntil(end) {
  for (; x < end; x++) sync.push([x, (695 + Math.sin(x * x * 1.7) * 1.1).toFixed(1)]);
}
for (const pulse of pulses) {
  noiseUntil(pulse[0][0]);
  sync.push(...pulse);
  x = pulse[pulse.length - 1][0] + 1;
}
noiseUntil(1527);
byId('sync').setAttribute('d', 'M' + sync.join('L'));

[243.5, 511.5, 778.5, 1045.5, 1312.5].forEach(cx => add(byId('cursors'), 'path', { d: `M${cx} 97V734`, class: 'cursor' }));

// Crankshaft angle ruler
const ruler = byId('ruler');
add(ruler, 'rect', { x: 243, y: 248, width: 1069, height: 20, fill: '#cfc' });
for (let i = 0; i < 80; i++) {
  const tx = Math.round(243 + i * 13.36) + 0.5;
  const len = i % 5 ? 3 : 5;
  add(ruler, 'path', { d: `M${tx} 248v${len}M${tx} 268v-${len}`, stroke: i % 5 ? '#687' : '#000' });
}
for (let i = 0; i <= 16; i++) {
  const offset = i === 0 ? 6 : i === 16 ? -12 : 1;
  add(ruler, 'text', { x: 243 + i * 66.8 + offset, y: 262, class: 'mark' }, i * 45 + '°');
}

// Measured points
const notes = byId('notes');
[
  [251, 125, 55, '(0°) 6.16 Bar'], [176, 338, 60, '(потери 10%)'], [445, 464, 107, '212° (32°) -0.18 Bar (29°)'],
  [405, 501, 101, '181° (1°) -0.49 Bar (36°)'], [734, 451, 60, '376° 0.06 Bar'], [849, 463, 107, '404° (44°) -0.17 Bar (24°)'],
  [914, 491, 63, '499° -0.31 Bar'], [1050, 471, 108, '539° (-1°) -0.30 Bar (-41°)']
].forEach(([nx, ny, w, t]) => {
  add(notes, 'rect', { x: nx, y: ny, width: w, height: 14, fill: '#fff' });
  add(notes, 'text', { x: nx + w / 2, y: ny + 10, class: 'note' }, t);
});
[[243, 122, '#fff'], [243, 354, '#008000'], [557.5, 481, '#f00'], [512, 498.5, '#f00'], [801.5, 467.5, '#fff'],
  [843, 480, '#f00'], [984, 488, '#fff'], [1043, 487.5, '#f00']].forEach(([cx, cy, fill]) =>
  add(notes, 'circle', { cx, cy, r: 3.5, fill, stroke: '#300', 'stroke-width': 0.6 }));

// Knob scales
document.querySelectorAll('.dial').forEach(dial => {
  const cx = dial.classList.contains('volt') ? 35 : 40;
  const g = dial.querySelector('.ticks');
  for (let a = -225; a <= 45; a += 15) {
    const c = Math.cos(a * Math.PI / 180), s = Math.sin(a * Math.PI / 180);
    const major = (a + 225) % 45 === 0;
    const r = major ? 21 : 19;
    add(g, 'path', { d: `M${cx + c * 17} ${26 + s * 17}L${cx + c * r} ${26 + s * r}`, stroke: major ? '#222' : '#999' });
  }
  add(g, 'circle', { cx, cy: 26, r: 15, fill: '#f6f6f6', stroke: '#bbb' });
  add(g, 'path', { d: `M${cx + 9} 14A15 15 0 0 1 ${cx - 9} 38`, fill: 'none', stroke: '#111', 'stroke-width': 1.5 });
});
```
